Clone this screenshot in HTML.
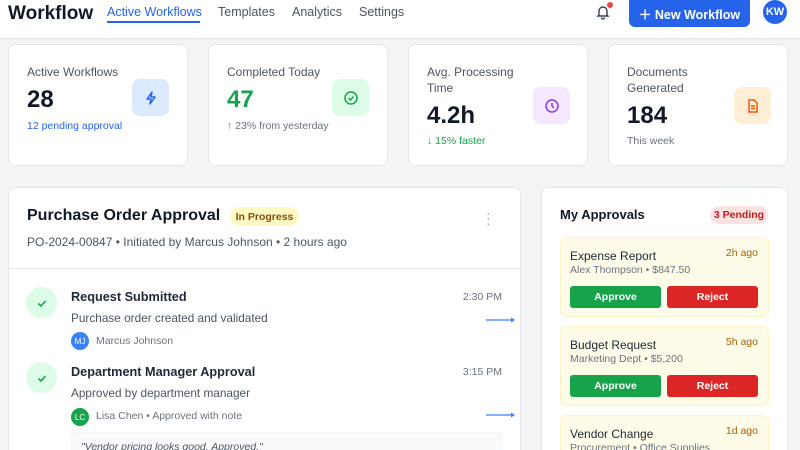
<!DOCTYPE html>
<html><head><meta charset="utf-8"><style>
*{box-sizing:border-box;margin:0;padding:0}
html,body{width:800px;height:450px;overflow:hidden}
body{background:#f3f4f6;font-family:"Liberation Sans",sans-serif;color:#111827}
#w{position:relative;width:800px;height:450px;overflow:hidden}
.a{position:absolute;white-space:nowrap}
.hdr{position:absolute;left:0;top:0;width:800px;height:39px;background:#fff;border-bottom:1px solid #e5e7eb}
.card{position:absolute;background:#fff;border:1px solid #e5e7eb;border-radius:8px}
.lbl{font-size:12px;color:#4b5563;line-height:16px}
.num{font-size:24px;font-weight:bold}
.ib{position:absolute;width:37px;height:37px;border-radius:8px;display:flex;align-items:center;justify-content:center}
.chk{position:absolute;width:31px;height:31px;border-radius:50%;background:#dcfce7;display:flex;align-items:center;justify-content:center}
.st{font-size:12.7px;font-weight:bold;color:#1f2937}
.ds{font-size:11.8px;color:#4b5563}
.tm{font-size:10.5px;color:#6b7280}
.av{position:absolute;width:18px;height:18px;border-radius:50%;color:#fff;font-size:8px;display:flex;align-items:center;justify-content:center}
.sm{font-size:10.5px;color:#6b7280}
.it{position:absolute;left:560px;width:209px;height:80px;background:#fefce8;border:1px solid #fef3c7;border-radius:6px}
.it .t{position:absolute;left:9px;top:11px;font-size:12px;color:#1f2937}
.it .s{position:absolute;left:9px;top:26px;font-size:10.5px;color:#6b7280}
.it .g{position:absolute;right:10px;top:9px;font-size:10.5px;color:#a16207}
.btn{position:absolute;top:48px;width:91px;height:22px;border-radius:3px;color:#fff;font-size:10.5px;font-weight:bold;display:flex;align-items:center;justify-content:center}
</style></head><body><div id="w">
<div class="hdr">
<div class="a" style="left:8px;top:3px;font-size:19px;font-weight:bold">Workflow</div>
<div class="a" style="left:107px;top:5px;font-size:12.5px;color:#2563eb">Active Workflows</div>
<div class="a" style="left:107px;top:21px;width:93px;height:2px;background:#2563eb"></div>
<div class="a" style="left:218px;top:5px;font-size:12.5px;color:#4b5563">Templates</div>
<div class="a" style="left:292px;top:5px;font-size:12.5px;color:#4b5563">Analytics</div>
<div class="a" style="left:359px;top:5px;font-size:12.5px;color:#4b5563">Settings</div>
<svg class="a" style="left:595px;top:4px" width="16" height="16" viewBox="0 0 16 16" fill="none" stroke="#374151" stroke-width="1.4"><path d="M4 11V7a4 4 0 018 0v4l1 1H3z"/><path d="M6.5 13.5a1.5 1.5 0 003 0"/></svg>
<div class="a" style="left:607px;top:2px;width:6px;height:6px;border-radius:50%;background:#ef4444"></div>
<div class="a" style="left:629px;top:0;width:121px;height:27px;background:#2563eb;border-radius:0 0 6px 6px;color:#fff;font-size:12.5px;font-weight:bold;display:flex;align-items:center;justify-content:center">＋&nbsp;New Workflow</div>
<div class="a" style="left:763px;top:0;width:24px;height:24px;border-radius:50%;background:#2563eb;color:#fff;font-size:11px;font-weight:bold;display:flex;align-items:center;justify-content:center">KW</div>
</div>

<div class="card" style="left:8px;top:44px;width:180px;height:122px"></div>
<div class="a lbl" style="left:27px;top:64px">Active Workflows</div>
<div class="a num" style="left:27px;top:86px">28</div>
<div class="a" style="left:27px;top:120px;font-size:10.5px;color:#2563eb">12 pending approval</div>
<div class="ib" style="left:132px;top:79px;background:#dbeafe"><svg width="16" height="16" viewBox="0 0 16 16" fill="none" stroke="#2563eb" stroke-width="1.5" stroke-linejoin="round"><path d="M9 2L4 9h4l-1 5 5-7H8z"/></svg></div>

<div class="card" style="left:208px;top:44px;width:180px;height:122px"></div>
<div class="a lbl" style="left:227px;top:64px">Completed Today</div>
<div class="a num" style="left:227px;top:86px;color:#16a34a">47</div>
<div class="a sm" style="left:227px;top:120px">↑ 23% from yesterday</div>
<div class="ib" style="left:332px;top:79px;background:#dcfce7"><svg width="16" height="16" viewBox="0 0 16 16" fill="none" stroke="#16a34a" stroke-width="1.5"><circle cx="8" cy="8" r="6"/><path d="M5.5 8l2 2 3-3.5"/></svg></div>

<div class="card" style="left:408px;top:44px;width:180px;height:122px"></div>
<div class="a lbl" style="left:427px;top:64px">Avg. Processing<br>Time</div>
<div class="a num" style="left:427px;top:102px">4.2h</div>
<div class="a" style="left:427px;top:135px;font-size:10.5px;color:#16a34a">↓ 15% faster</div>
<div class="ib" style="left:533px;top:87px;background:#f3e8ff"><svg width="16" height="16" viewBox="0 0 16 16" fill="none" stroke="#9333ea" stroke-width="1.5"><circle cx="8" cy="8" r="6"/><path d="M8 5v3l2 2"/></svg></div>

<div class="card" style="left:608px;top:44px;width:180px;height:122px"></div>
<div class="a lbl" style="left:627px;top:64px">Documents<br>Generated</div>
<div class="a num" style="left:627px;top:102px">184</div>
<div class="a sm" style="left:627px;top:135px">This week</div>
<div class="ib" style="left:734px;top:87px;background:#ffedd5"><svg width="16" height="16" viewBox="0 0 16 16" fill="none" stroke="#ea580c" stroke-width="1.5"><path d="M4 2h5l3 3v9H4z"/><path d="M6 8h4M6 10.5h4"/></svg></div>

<div class="card" style="left:8px;top:187px;width:513px;height:300px"></div>
<div class="a" style="left:27px;top:207px;font-size:16px;font-weight:bold">Purchase Order Approval</div>
<div class="a" style="left:230px;top:207px;width:69px;height:19px;border-radius:10px;background:#fef9c3;color:#854d0e;font-size:10.5px;font-weight:bold;display:flex;align-items:center;justify-content:center">In Progress</div>
<div class="a" style="left:486px;top:211px;font-size:14px;color:#9ca3af;line-height:5px;width:4px">·<br>·<br>·</div>
<div class="a" style="left:27px;top:235px;font-size:12px;color:#4b5563">PO-2024-00847 • Initiated by Marcus Johnson • 2 hours ago</div>
<div class="a" style="left:9px;top:268px;width:511px;height:1px;background:#e5e7eb"></div>

<div class="chk" style="left:26px;top:287px"><svg width="12" height="12" viewBox="0 0 12 12" fill="none" stroke="#16a34a" stroke-width="1.6"><path d="M2.5 6.5l2.5 2.5 4.5-5"/></svg></div>
<div class="a st" style="left:71px;top:290px">Request Submitted</div>
<div class="a tm" style="right:298px;top:291px">2:30 PM</div>
<div class="a ds" style="left:71px;top:311px">Purchase order created and validated</div>
<div class="av" style="left:71px;top:332px;background:#3b82f6">MJ</div>
<div class="a sm" style="left:96px;top:335px">Marcus Johnson</div>

<div class="chk" style="left:26px;top:362px"><svg width="12" height="12" viewBox="0 0 12 12" fill="none" stroke="#16a34a" stroke-width="1.6"><path d="M2.5 6.5l2.5 2.5 4.5-5"/></svg></div>
<div class="a st" style="left:71px;top:365px">Department Manager Approval</div>
<div class="a tm" style="right:298px;top:366px">3:15 PM</div>
<div class="a ds" style="left:71px;top:386px">Approved by department manager</div>
<div class="av" style="left:71px;top:408px;background:#16a34a">LC</div>
<div class="a sm" style="left:96px;top:410px">Lisa Chen • Approved with note</div>
<div class="a" style="left:71px;top:432px;width:431px;height:30px;background:#f9fafb;border:1px solid #f3f4f6;border-radius:4px"></div>
<div class="a" style="left:81px;top:441px;font-size:10.5px;font-style:italic;color:#4b5563">"Vendor pricing looks good. Approved."</div>

<svg class="a" style="left:484px;top:316px" width="50" height="8"><path d="M2 4h26" stroke="#3b82f6" stroke-width="1.2"/><path d="M27 1.5l4 2.5-4 2.5z" fill="#3b82f6"/></svg>
<svg class="a" style="left:484px;top:411px" width="50" height="8"><path d="M2 4h26" stroke="#3b82f6" stroke-width="1.2"/><path d="M27 1.5l4 2.5-4 2.5z" fill="#3b82f6"/></svg>

<div class="card" style="left:541px;top:187px;width:247px;height:300px"></div>
<div class="a" style="left:560px;top:207px;font-size:13px;font-weight:bold">My Approvals</div>
<div class="a" style="left:710px;top:206px;width:58px;height:18px;border-radius:9px;background:#fee2e2;color:#b91c1c;font-size:10.5px;font-weight:bold;display:flex;align-items:center;justify-content:center">3 Pending</div>

<div class="it" style="top:237px"><div class="t">Expense Report</div><div class="s">Alex Thompson • $847.50</div><div class="g">2h ago</div>
<div class="btn" style="left:9px;background:#16a34a">Approve</div><div class="btn" style="left:106px;background:#dc2626">Reject</div></div>
<div class="it" style="top:326px"><div class="t">Budget Request</div><div class="s">Marketing Dept • $5,200</div><div class="g">5h ago</div>
<div class="btn" style="left:9px;background:#16a34a">Approve</div><div class="btn" style="left:106px;background:#dc2626">Reject</div></div>
<div class="it" style="top:415px;height:35px;border-bottom:none;border-radius:6px 6px 0 0"><div class="t">Vendor Change</div><div class="s">Procurement • Office Supplies</div><div class="g">1d ago</div></div>
</div></body></html>
